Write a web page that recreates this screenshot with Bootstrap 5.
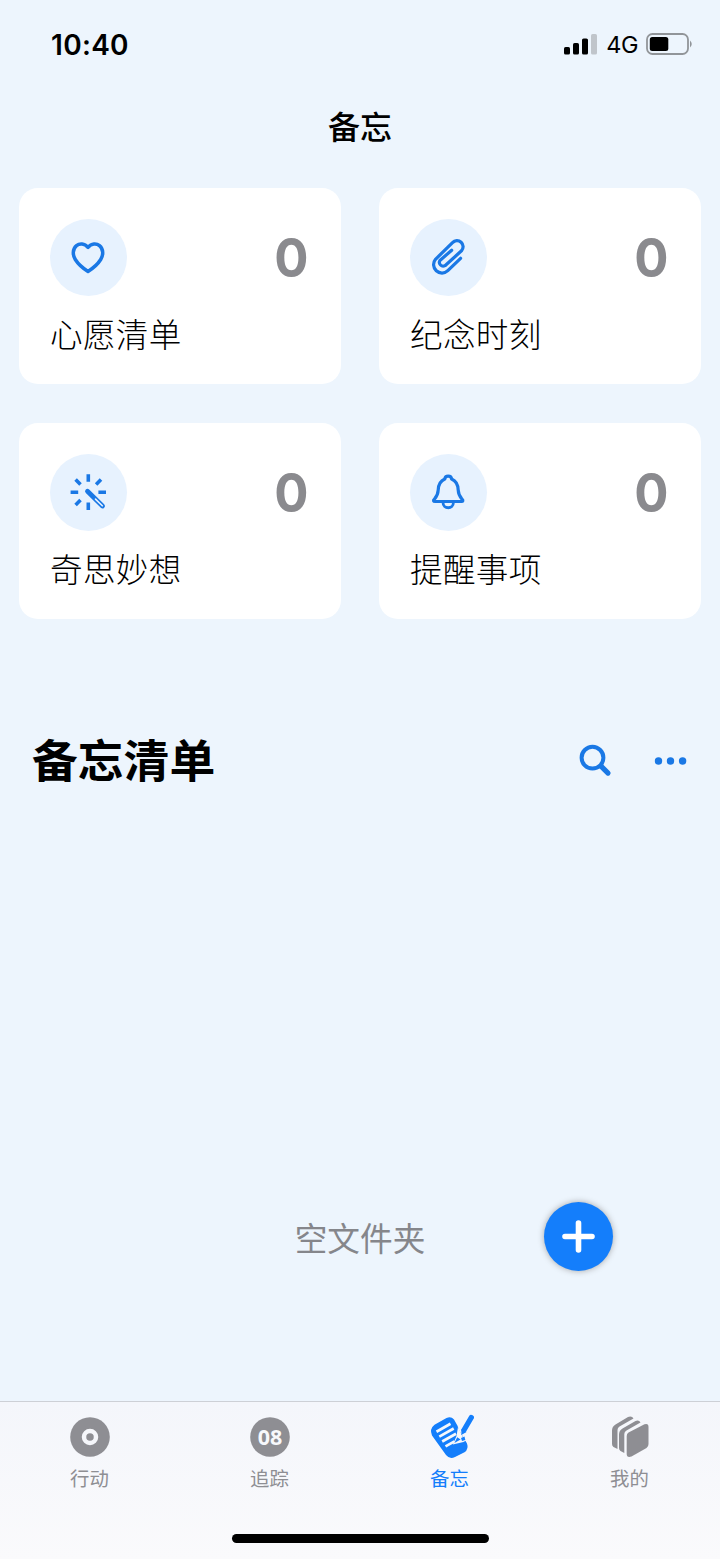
<!DOCTYPE html>
<html lang="zh-CN">
<head>
<meta charset="utf-8">
<meta name="viewport" content="width=device-width, initial-scale=1">
<title>备忘</title>
<link href="https://cdn.jsdelivr.net/npm/bootstrap@5.3.0/dist/css/bootstrap.min.css" rel="stylesheet">
<style>
:root{--accent:#147efb;--line:#1a78e5;--muted:#8e8e93}
body{background:#edf5fd;color:#000;font-family:"Noto Sans CJK SC",sans-serif;overflow:hidden}
svg{display:block;flex:none}
.screen{width:720px;height:1559px}
.status{height:88px;padding:1px 27px 0 51px;font-family:Inter,sans-serif}
.status svg{margin-top:-1px}
.clock{font-size:28px;font-weight:600;letter-spacing:.3px;line-height:88px}
.net{font-size:23.5px;line-height:88px;letter-spacing:-.5px}
.page-title{height:100px;font-size:32px;font-weight:500;line-height:74px}
.tiles{display:grid;grid-template-columns:1fr 1fr;gap:39px 38px;padding:0 19px}
.tile{height:196px;border:0;border-radius:19px;padding:31px 32px 0 31px;background:#fff;color:#000}
.disc{width:77px;height:77px;background:#e7f2fe}
.disc svg{fill:none;stroke:var(--line);stroke-width:3.2;stroke-linecap:round;stroke-linejoin:round}
.count{font:700 54px/77px Inter,sans-serif;color:#8a8a8e;transform:scaleX(.94);transform-origin:right;margin-right:1px}
.tile-name{font-size:32.6px;font-weight:300;line-height:40px;margin-top:17px;letter-spacing:.3px}
.list-head{height:70px;margin-top:106px;padding:0 33px 0 32px}
.list-head h2{font-size:45.8px;font-weight:700;line-height:66px;height:70px}
.actions{gap:42px;padding-top:2px}
.blank{height:70px;margin-top:407px}
.blank p{font-size:32.7px;line-height:70px;color:#85868b;text-align:center}
.add{position:absolute;left:543.5px;top:0;width:69px;height:69px;background:var(--accent);box-shadow:0 0 6px rgba(60,50,40,.4);border:0}
.tabs{height:158px;border-top:1px solid #cdd0d6;background:linear-gradient(#f4f6fb,#fafafc)}
.tab{width:180px;height:110px;padding:11px 1px 0 0;color:var(--muted);text-decoration:none}
.tab.active{color:var(--accent)}
.tab span{font-size:19.4px;line-height:28px;margin-top:3px}
.home{width:257px;height:9px;margin-top:22px;background:#000}
</style>
</head>
<body>
<main class="screen d-flex flex-column">
  <header class="status d-flex justify-content-between">
    <div class="clock">10:40</div>
    <div class="d-flex align-items-center">
      <svg width="34" height="22" viewBox="0 0 34 22"><rect x="0" y="14" width="6" height="7.5" rx="1.6"/><rect x="9" y="10" width="6" height="11.5" rx="1.6"/><rect x="18" y="5.5" width="6" height="16" rx="1.6"/><rect x="27" y="1" width="6" height="20.5" rx="1.6" fill="#c0c5cb"/></svg>
      <span class="net ms-2 me-2">4G</span>
      <svg width="47" height="22" viewBox="0 0 47 22"><rect x="1" y="1" width="41" height="20" rx="5.5" fill="none" stroke="#919599" stroke-width="1.8"/><rect x="3.8" y="4" width="18.5" height="14" rx="2.5"/><path d="M44 7.500Q47.500 11 44 14.500z" fill="#919599"/></svg>
    </div>
  </header>
  <h1 class="page-title text-center m-0">备忘</h1>

  <section class="tiles">
    <a class="card tile text-decoration-none" href="#">
      <div class="d-flex justify-content-between">
        <div class="disc rounded-circle"><svg width="77" height="77" viewBox="0 0 77 77"><path stroke-width="3.5" d="M38 28.5C34.5 24.2 29.5 24.2 26.5 26.7C22.4 30.2 22.5 36 25.3 40.5C28.3 45.3 33 49.3 38 52.4C43 49.3 47.7 45.3 50.7 40.5C53.5 36 53.6 30.2 49.5 26.7C46.5 24.2 41.5 24.2 38 28.5z"/></svg></div>
        <span class="count">0</span>
      </div>
      <div class="tile-name">心愿清单</div>
    </a>
    <a class="card tile text-decoration-none" href="#">
      <div class="d-flex justify-content-between">
        <div class="disc rounded-circle"><svg width="77" height="77" viewBox="0 0 77 77"><path d="M50.6 39.3L37.8 51.7A8.4 8.4 0 0 1 25.5 40.3L42.5 23.6A6 6 0 0 1 51.5 31.8L35 46.7A3.8 3.8 0 0 1 29.9 41.5L41.7 31.2"/></svg></div>
        <span class="count">0</span>
      </div>
      <div class="tile-name">纪念时刻</div>
    </a>
    <a class="card tile text-decoration-none" href="#">
      <div class="d-flex justify-content-between">
        <div class="disc rounded-circle"><svg width="77" height="77" viewBox="0 0 77 77"><path stroke-width="3.6" stroke-linecap="butt" d="M38.3 20.3V27.8M38.3 48.5V56M20.6 38.2H28.2M48.4 38.2H56M25.6 25.5L30.5 30.4M51 25.5L46.1 30.4M25.6 51L30.5 46.1"/><path stroke-width="4.8" d="M37.5 37.3L52.5 52"/><path stroke="#e7f2fe" stroke-width="1.6" d="M45.5 45.1L52.3 51.8"/></svg></div>
        <span class="count">0</span>
      </div>
      <div class="tile-name">奇思妙想</div>
    </a>
    <a class="card tile text-decoration-none" href="#">
      <div class="d-flex justify-content-between">
        <div class="disc rounded-circle"><svg width="77" height="77" viewBox="0 0 77 77"><path d="M34.8 25C35.2 21.2 41.2 21.2 41.6 25C46.3 27 48 31 48.2 36C48.4 40.5 49.5 42.3 51.8 44.8C53.6 46.5 53 47.5 51.3 47.5H25.1C23.4 47.5 22.8 46.5 24.6 44.8C26.9 42.3 28 40.5 28.2 36C28.4 31 30.1 27 34.8 25z"/><path stroke-width="2.8" d="M33 48.5C33 55.5 43.4 55.5 43.4 48.5"/></svg></div>
        <span class="count">0</span>
      </div>
      <div class="tile-name">提醒事项</div>
    </a>
  </section>

  <section class="list-head d-flex justify-content-between align-items-center">
    <h2 class="m-0">备忘清单</h2>
    <div class="actions d-flex align-items-center">
      <svg width="34" height="34" viewBox="0 0 34 34" fill="none" stroke="#1a78e5" stroke-linecap="round"><circle cx="14.5" cy="13.7" r="10.9" stroke-width="4"/><path d="M23 22.2L30 29.1" stroke-width="5.2"/></svg>
      <svg width="33" height="8" viewBox="0 0 33 8" fill="#1a78e5"><circle cx="4.5" cy="4" r="3.7"/><circle cx="16.5" cy="4" r="3.7"/><circle cx="28.6" cy="4" r="3.7"/></svg>
    </div>
  </section>

  <section class="blank position-relative">
    <p class="m-0">空文件夹</p>
    <button class="add rounded-circle p-0" aria-label="add"><svg width="69" height="69" viewBox="0 0 69 69"><path d="M21 34.5H48M34.5 21V48" stroke="#fff" stroke-width="5.6" stroke-linecap="round"/></svg></button>
  </section>

  <footer class="tabs mt-auto">
    <nav class="d-flex">
      <a class="tab d-flex flex-column align-items-center" href="#"><svg width="48" height="48" viewBox="0 0 48 48"><circle cx="24" cy="24" r="19.8" fill="#8e8e93"/><circle cx="24" cy="24" r="6" fill="none" stroke="#f5f6fa" stroke-width="4.5"/></svg><span>行动</span></a>
      <a class="tab d-flex flex-column align-items-center" href="#"><svg width="48" height="48" viewBox="0 0 48 48"><circle cx="24" cy="24" r="19.8" fill="#8e8e93"/><text x="24" y="31.5" text-anchor="middle" font-family="Noto Sans" font-weight="700" font-size="21.5" fill="#f7f8fb">08</text></svg><span>追踪</span></a>
      <a class="tab active d-flex flex-column align-items-center" href="#"><svg width="48" height="48" viewBox="0 0 48 48"><path fill="#147efb" d="M8.5 11.8L20.5 5Q25 3 28 6.5L31.5 12.7L33 17L41 30.5Q43 36 38.5 39.3L29 44Q23.5 46.5 20 42L6 22.5Q3.2 16 8.5 11.8z"/><g stroke="#f5f7fb" stroke-width="2.7"><path d="M10.5 18.7L24.5 10.8M13.3 23.6L27.7 15.5M16.2 28.5L30 20.8M19.5 33.4L28.5 28.3"/></g><path fill="#f5f7fb" d="M32 14L36.5 23.5L42.5 26L37.5 29L26.8 31.5L30.5 23z"/><path fill="#147efb" d="M28.4 29.9L31.2 24.3L34.6 26.5zM35 25L38.5 23.6L39.3 27L36 28z"/><path stroke="#147efb" stroke-width="5.3" stroke-linecap="round" d="M38 17L45.3 4.5"/><path fill="#147efb" d="M35.5 16L40.5 19L35.3 22z"/></svg><span>备忘</span></a>
      <a class="tab d-flex flex-column align-items-center" href="#"><svg width="48" height="48" viewBox="0 0 48 48" fill="#8e8e93"><path d="M9.5 11.5L22 4Q26 2.7 27.5 5.5L13.5 13.5Q11.5 14.8 11.5 17V36L7.5 34Q6 33 6 31V17.5Q6 13.5 9.5 11.5z"/><path d="M16.500 15.500L29.500 8Q33 6.700 34.500 9.500L20.500 17.500Q18.300 18.800 18.300 21V40L14.500 38Q13 37 13 35V21.500Q13 17.500 16.500 15.500z"/><path d="M22.500 19.500L38.500 11.300Q42.500 10 42.500 14V31Q42.500 33.700 40.500 35L25.500 43.500Q20.700 45 20.700 41V23Q20.700 20.500 22.500 19.500z"/></svg><span>我的</span></a>
    </nav>
    <div class="home rounded-pill mx-auto"></div>
  </footer>
</main>
<script src="https://cdn.jsdelivr.net/npm/bootstrap@5.3.0/dist/js/bootstrap.bundle.min.js"></script>
</body>
</html>
